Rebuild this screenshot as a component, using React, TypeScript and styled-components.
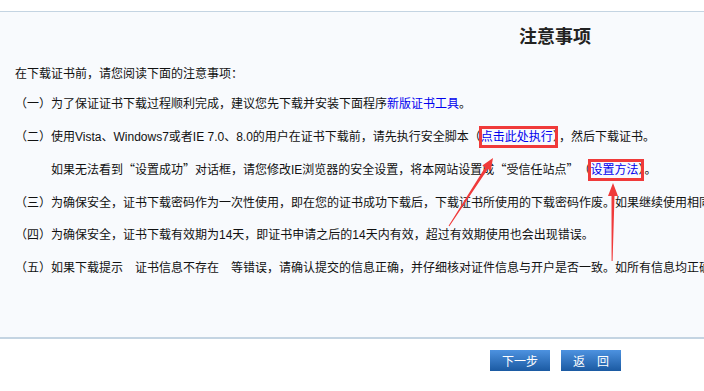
import styled, { createGlobalStyle } from "styled-components";

const GlobalStyle = createGlobalStyle`
  html, body {
    margin: 0;
    padding: 0;
    background: #fff;
    overflow: hidden;
  }
  body {
    font-family: "Liberation Sans", "Noto Sans CJK SC", sans-serif;
    font-size: 12px;
    color: #111;
  }
`;

const Page = styled.div`
  width: 1110px;
  padding-top: 11px;
`;

const Panel = styled.div`
  position: relative;
  height: 328px;
  box-sizing: border-box;
  padding: 9px 15px 0;
  background: #f8fafd;
  border-top: 1px solid #c4d4e2;
  border-bottom: 2px solid #c4d4e2;
`;

const Title = styled.h2`
  margin: 0;
  text-align: center;
  font-size: 18px;
  line-height: 32px;
  font-weight: bold;
  color: #222;
`;

const Intro = styled.p`
  margin: 5px 0 -2.6px;
  line-height: 32.6px;
  white-space: nowrap;
`;

const Item = styled.p<{ $indent?: boolean }>`
  margin: 0;
  line-height: 32.6px;
  white-space: nowrap;
  padding-left: ${(p) => (p.$indent ? "36px" : "0")};
`;

// full-width CJK quote marks
const Quote = styled.span`
  font-family: "Noto Sans CJK SC", sans-serif;
  display: inline-block;
  width: 12px;
  text-align: ${(p: { $open?: boolean }) => (p.$open ? "right" : "left")};
`;

const Link = styled.a`
  color: #0000ee;
  text-decoration: none;
  cursor: pointer;
`;

// red annotation boxes drawn over the links
const Marked = styled.span<{ $l: number; $r: number }>`
  position: relative;
  &::after {
    content: "";
    position: absolute;
    left: ${(p) => p.$l}px;
    right: ${(p) => p.$r}px;
    top: -4px;
    bottom: -4px;
    border: 3px solid #f03a3a;
    pointer-events: none;
  }
`;

const Arrows = styled.svg`
  position: absolute;
  left: 0;
  top: -12px;
  width: 1110px;
  height: 340px;
  pointer-events: none;
`;

const Buttons = styled.div`
  display: flex;
  justify-content: center;
  gap: 11px;
  margin-top: 11px;
  padding-left: 1px;
`;

const Button = styled.button`
  width: 60px;
  height: 21px;
  padding: 0;
  border: none;
  background: linear-gradient(#4d92e0, #1b5aa2);
  color: #fff;
  font-family: "Noto Sans CJK SC", sans-serif;
  font-size: 12px;
  line-height: 21px;
  cursor: pointer;
`;

const App = () => {
  return (
    <>
      <GlobalStyle />
      <Page>
        <Panel>
          <Title>注意事项</Title>
          <Intro>在下载证书前，请您阅读下面的注意事项：</Intro>
          <Item>
            （一）为了保证证书下载过程顺利完成，建议您先下载并安装下面程序
            <Link>新版证书工具</Link>。
          </Item>
          <Item>
            （二）使用Vista、Windows7或者IE 7.0、8.0的用户在证书下载前，请先执行安全脚本（
            <Marked $l={-2} $r={-5}>
              <Link>点击此处执行</Link>
            </Marked>
            ），然后下载证书。
          </Item>
          <Item $indent>
            如果无法看到<Quote $open>“</Quote>设置成功<Quote>”</Quote>
            对话框，请您修改IE浏览器的安全设置，将本网站设置成<Quote $open>“</Quote>受信任站点
            <Quote>”</Quote>（
            <Marked $l={-2} $r={-6}>
              <Link>设置方法</Link>
            </Marked>
            ）。
          </Item>
          <Item>
            （三）为确保安全，证书下载密码作为一次性使用，即在您的证书成功下载后，下载证书所使用的下载密码作废。如果继续使用相同的下载密码下载证书，系统将提示错误。
          </Item>
          <Item>
            （四）为确保安全，证书下载有效期为14天，即证书申请之后的14天内有效，超过有效期使用也会出现错误。
          </Item>
          <Item>
            （五）如果下载提示　证书信息不存在　等错误，请确认提交的信息正确，并仔细核对证件信息与开户是否一致。如所有信息均正确，请与客服联系。
          </Item>
          <Arrows viewBox="0 0 1110 340">
            <polygon
              fill="#f03a3a"
              points="448.6,225.7 485.2,167.3 482.3,165.4 493,158 490.7,170.8 487.8,168.9 449.4,226.3"
            />
            <polygon
              fill="#f03a3a"
              points="611.6,261 611.5,196 608,196 613,183 618,196 614.5,196 612.6,261"
            />
          </Arrows>
        </Panel>
        <Buttons>
          <Button>下一步</Button>
          <Button>返　回</Button>
        </Buttons>
      </Page>
    </>
  );
};

export default App;
